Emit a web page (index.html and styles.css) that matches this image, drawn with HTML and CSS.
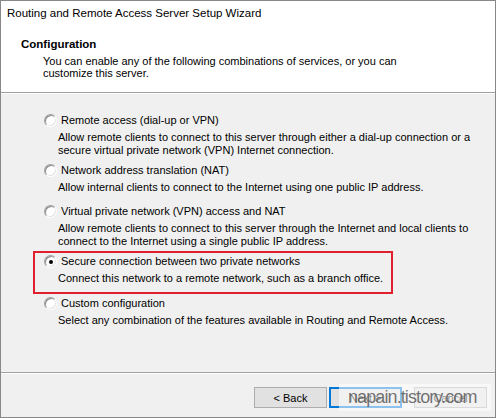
FILE: index.html
```html
<!DOCTYPE html>
<html>
<head>
<meta charset="utf-8">
<link rel="stylesheet" href="styles.css">
</head>
<body>
<div class="window">
  <div class="header">
    <div class="caption">Routing and Remote Access Server Setup Wizard</div>
    <div class="page-title">Configuration</div>
    <div class="page-sub">You can enable any of the following combinations of services, or you can<br>customize this server.</div>
  </div>
  <div class="body">
    <div class="opt opt-1">
      <div class="radio-row"><span class="radio"></span><span class="label">Remote access (dial-up or VPN)</span></div>
      <div class="desc">Allow remote clients to connect to this server through either a dial-up connection or a<br>secure virtual private network (VPN) Internet connection.</div>
    </div>
    <div class="opt opt-2">
      <div class="radio-row"><span class="radio"></span><span class="label">Network address translation (NAT)</span></div>
      <div class="desc">Allow internal clients to connect to the Internet using one public IP address.</div>
    </div>
    <div class="opt opt-3">
      <div class="radio-row"><span class="radio"></span><span class="label">Virtual private network (VPN) access and NAT</span></div>
      <div class="desc">Allow remote clients to connect to this server through the Internet and local clients to<br>connect to the Internet using a single public IP address.</div>
    </div>
    <div class="opt opt-4">
      <div class="radio-row"><span class="radio checked"></span><span class="label">Secure connection between two private networks</span></div>
      <div class="desc">Connect this network to a remote network, such as a branch office.</div>
      <div class="highlight"></div>
    </div>
    <div class="opt opt-5">
      <div class="radio-row"><span class="radio"></span><span class="label">Custom configuration</span></div>
      <div class="desc">Select any combination of the features available in Routing and Remote Access.</div>
    </div>
  </div>
  <div class="footer">
    <div class="btn-pair">
      <button class="btn">&lt; Back</button>
      <button class="btn btn-default">Next &gt;</button>
    </div>
    <button class="btn">Cancel</button>
    <div class="watermark">napain.tistory.com</div>
  </div>
</div>
</body>
</html>
```

FILE: styles.css
```css
* { box-sizing: border-box; }
html, body { margin: 0; padding: 0; background: #ffffff; }
body {
  font-family: "Liberation Sans", Arial, sans-serif;
  font-size: 11px;
  color: #000;
}
.window {
  width: 496px;
  height: 418px;
  border: 1px solid #888888;
  display: flex;
  flex-direction: column;
  background: #f0f0f0;
}
.header {
  height: 92px;
  background: #ffffff;
  border-bottom: 1px solid #a0a0a0;
  padding-top: 6px;
}
.caption {
  font-size: 11.5px;
  line-height: 13px;
  padding-left: 6px;
}
.page-title {
  margin-top: 18px;
  font-weight: bold;
  font-size: 11.5px;
  line-height: 13px;
  padding-left: 20px;
}
.page-sub {
  margin-top: 4px;
  line-height: 12px;
  padding-left: 42px;
}
.body {
  flex: 1;
  border-top: 1px solid #ffffff;
  padding-top: 20px;
}
.opt { position: relative; }
.opt-2 { margin-top: 7px; }
.opt-3 { margin-top: 11px; }
.opt-4 { margin-top: 7px; }
.opt-5 { margin-top: 12px; }
.radio-row {
  display: flex;
  align-items: center;
  height: 13px;
  line-height: 13px;
  padding-left: 43px;
}
.radio {
  width: 13px;
  height: 13px;
  border-radius: 50%;
  border: 1px solid;
  border-color: #a0a0a0 #ffffff #ffffff #a0a0a0;
  background: #ffffff;
  box-shadow: inset 1px 1px 0 #8a8a8a, inset -1px -1px 0 #e3e3e3;
  display: flex;
  align-items: center;
  justify-content: center;
  flex: none;
}
.radio.checked::after {
  content: "";
  width: 4px;
  height: 4px;
  border-radius: 50%;
  background: #000;
}
.label { margin-left: 4px; }
.desc {
  margin-top: 4px;
  line-height: 13px;
  padding-left: 57px;
}
.highlight {
  position: absolute;
  left: 32px;
  top: -4px;
  width: 360px;
  height: 43px;
  border: 2px solid #e0202e;
}
.footer {
  position: relative;
  height: 45px;
  border-top: 1px solid #a0a0a0;
  box-shadow: inset 0 1px 0 #ffffff;
  display: flex;
  justify-content: flex-end;
  align-items: flex-start;
  padding: 14px 8px 0 0;
  gap: 12px;
}
.btn-pair { display: flex; gap: 2px; }
.btn {
  width: 73px;
  height: 21px;
  background: #e1e1e1;
  border: 1px solid #adadad;
  font-family: "Liberation Sans", Arial, sans-serif;
  font-size: 11px;
  color: #000;
  padding: 0;
  margin: 0;
}
.btn-default { border: 2px solid #0078d7; }
.watermark {
  position: absolute;
  left: 338px;
  top: 11px;
  width: 152px;
  height: 27px;
  background: rgba(255, 255, 255, 0.55);
  color: rgba(90, 90, 90, 0.85);
  font-size: 18px;
  letter-spacing: -0.9px;
  line-height: 27px;
  padding-left: 9px;
}
```
